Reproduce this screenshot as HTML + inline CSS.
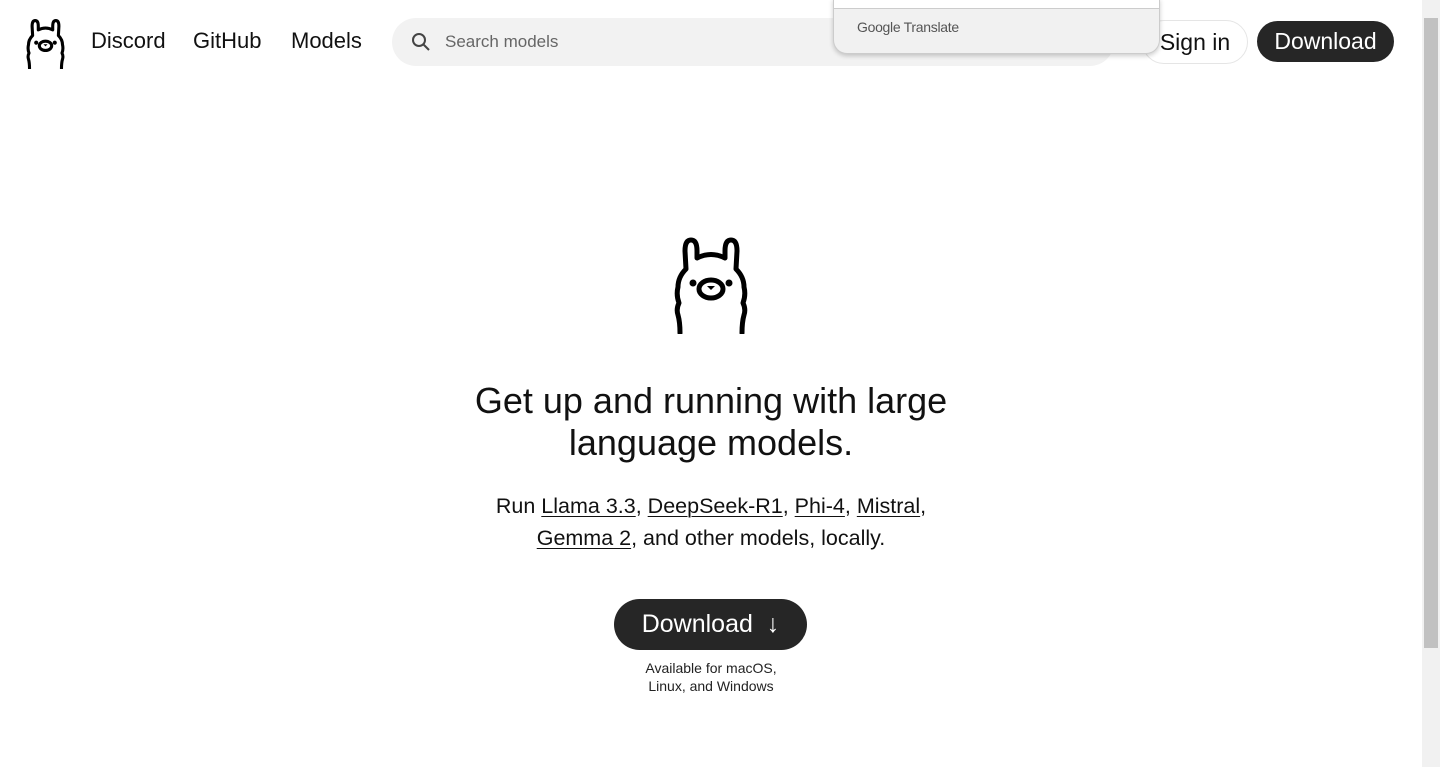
<!DOCTYPE html>
<html><head><meta charset="utf-8"><style>
body{margin:0;width:1440px;height:767px;overflow:hidden;background:#fff;font-family:"Liberation Sans",sans-serif;color:#111;position:relative}
.nav a{position:absolute;top:28px;font-size:22px;color:#111;text-decoration:none}
.search{position:absolute;left:392px;top:18px;width:722px;height:48px;border-radius:24px;background:#f2f2f2}
.search span{position:absolute;left:53px;top:14px;font-size:17px;color:#666}
.signin{position:absolute;left:1142px;top:20px;width:104px;height:42px;border:1px solid #e5e5e5;border-radius:22px;font-size:23px;line-height:42px;text-align:center;background:#fff}
.dl{position:absolute;left:1257px;top:21px;width:137px;height:41px;border-radius:21px;background:#262626;color:#fff;font-size:23px;line-height:41px;text-align:center}
.gt{position:absolute;left:833px;top:-2px;width:325px;height:55px;background:#f1f1f1;border:1px solid #ccc;border-top:none;border-radius:0 0 14px 14px;box-shadow:0 2px 5px rgba(0,0,0,.2)}
.gt .top{height:10px;background:#fff;border-bottom:1px solid #ccc}
.gt span{position:absolute;left:23px;top:21px;font-size:14px;color:#555;letter-spacing:-0.3px}
h1{position:absolute;left:0;width:1422px;top:380px;margin:0;text-align:center;font-weight:normal;font-size:36px;line-height:42px}
.sub{position:absolute;left:0;width:1422px;top:490px;text-align:center;font-size:21.5px;line-height:32px}
.sub u{text-decoration-thickness:1px;text-underline-offset:3px}
.big{position:absolute;left:614px;top:599px;width:193px;height:51px;border-radius:26px;background:#262626;color:#fff;font-size:25px;line-height:50px;text-align:center}
.avail{position:absolute;left:0;width:1422px;top:659px;text-align:center;font-size:14px;line-height:18px;color:#222}
.sb{position:absolute;right:0;top:0;width:18px;height:767px;background:#f1f1f1}
.sb div{position:absolute;left:2px;top:18px;width:14px;height:630px;background:#c1c1c1}
</style></head><body>
<svg style="position:absolute;left:26px;top:19px" width="39" height="50" viewBox="0 0 72 97"><g fill="none" stroke="#000" stroke-width="6" stroke-linejoin="round" stroke-linecap="round"><path d="M5 96 Q5 85 3 78 Q1 72 4 66 Q1 58 3 50 Q3 40 11 32 L10 14 Q10 3 16 3 Q22 3 22 14 L22 21 Q36 14 50 21 L50 14 Q50 3 56 3 Q62 3 62 14 L61 32 Q69 40 69 50 Q71 58 68 66 Q71 72 69 78 Q67 85 67 96"/><ellipse cx="36" cy="52" rx="12" ry="9"/></g><circle cx="18" cy="46" r="4"/><circle cx="54" cy="46" r="4"/><path d="M32 49 h8 l-4 4z"/></svg>
<div class="nav"><a style="left:91px">Discord</a><a style="left:193px">GitHub</a><a style="left:291px">Models</a></div>
<div class="search"><svg style="position:absolute;left:19px;top:14px" width="20" height="20" viewBox="0 0 20 20"><circle cx="8" cy="8" r="6" fill="none" stroke="#444" stroke-width="2"/><path d="M12.5 12.5 L18 18" stroke="#444" stroke-width="2"/></svg><span>Search models</span></div>
<div class="signin">Sign in</div>
<div class="dl">Download</div>
<div class="gt"><div class="top"></div><span>Google Translate</span></div>
<svg style="position:absolute;left:674px;top:237px" width="74" height="97" viewBox="0 0 72 97"><g fill="none" stroke="#000" stroke-width="5" stroke-linejoin="round" stroke-linecap="round"><path d="M5 96 Q5 85 3 78 Q1 72 4 66 Q1 58 3 50 Q3 40 11 32 L10 14 Q10 3 16 3 Q22 3 22 14 L22 21 Q36 14 50 21 L50 14 Q50 3 56 3 Q62 3 62 14 L61 32 Q69 40 69 50 Q71 58 68 66 Q71 72 69 78 Q67 85 67 96"/><ellipse cx="36" cy="52" rx="12" ry="9"/></g><circle cx="18" cy="46" r="3.5"/><circle cx="54" cy="46" r="3.5"/><path d="M32 49 h8 l-4 4z"/></svg>
<h1>Get up and running with large<br>language models.</h1>
<div class="sub">Run <u>Llama 3.3</u>, <u>DeepSeek-R1</u>, <u>Phi-4</u>, <u>Mistral</u>,<br><u>Gemma 2</u>, and other models, locally.</div>
<div class="big">Download &nbsp;↓</div>
<div class="avail">Available for macOS,<br>Linux, and Windows</div>
<div class="sb"><div></div></div>
</body></html>
